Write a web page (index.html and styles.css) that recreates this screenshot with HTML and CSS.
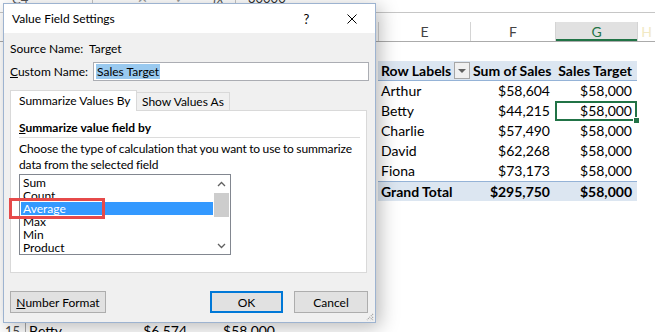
FILE: index.html
```html
<!DOCTYPE html>
<html lang="en">
<head>
    <meta charset="UTF-8">
    <title>Value Field Settings</title>
    <link rel="stylesheet" href="styles.css">
</head>
<body>
    <div class="sheet">
        <div class="fbar">
            <div class="fbar-row">
                <span class="namebox">C4</span>
                <span class="fb-dots">⋮</span>
                <span class="fb-icon">✕</span>
                <span class="fb-icon">✓</span>
                <span class="fb-fx">fx</span>
                <span class="fb-value">30000</span>
            </div>
        </div>

        <!-- row numbers and columns A-D sit under the dialog -->
        <div class="grid colheads">
            <div class="rh"></div>
            <div class="ch"></div><div class="ch"></div><div class="ch"></div><div class="ch"></div>
            <div class="ch">E</div><div class="ch">F</div><div class="ch ch-sel">G</div><div class="ch ch-last">H</div>
        </div>

        <div class="grid row row1">
            <div class="rh"></div>
        </div>
        <div class="grid row">
            <div class="rh"></div><div></div><div></div><div></div><div></div>
            <div class="cell ph labels">Row Labels <span class="filter"></span></div>
            <div class="cell ph num">Sum of Sales</div>
            <div class="cell ph num">Sales Target</div>
            <div></div>
        </div>
        <div class="grid row">
            <div class="rh"></div><div></div><div></div><div></div><div></div>
            <div class="cell">Arthur</div><div class="cell num">$58,604</div><div class="cell num">$58,000</div><div></div>
        </div>
        <div class="grid row">
            <div class="rh"></div><div></div><div></div><div></div><div></div>
            <div class="cell">Betty</div><div class="cell num">$44,215</div><div class="cell num sel">$58,000<span class="handle"></span></div><div></div>
        </div>
        <div class="grid row">
            <div class="rh"></div><div></div><div></div><div></div><div></div>
            <div class="cell">Charlie</div><div class="cell num">$57,490</div><div class="cell num">$58,000</div><div></div>
        </div>
        <div class="grid row">
            <div class="rh"></div><div></div><div></div><div></div><div></div>
            <div class="cell">David</div><div class="cell num">$62,268</div><div class="cell num">$58,000</div><div></div>
        </div>
        <div class="grid row">
            <div class="rh"></div><div></div><div></div><div></div><div></div>
            <div class="cell">Fiona</div><div class="cell num">$73,173</div><div class="cell num">$58,000</div><div></div>
        </div>
        <div class="grid row">
            <div class="rh"></div><div></div><div></div><div></div><div></div>
            <div class="cell pt">Grand Total</div><div class="cell pt num">$295,750</div><div class="cell pt num">$58,000</div><div></div>
        </div>
        <div class="grid row"><div class="rh"></div></div>
        <div class="grid row"><div class="rh"></div></div>
        <div class="grid row"><div class="rh"></div></div>
        <div class="grid row"><div class="rh"></div></div>
        <div class="grid row"><div class="rh"></div></div>
        <div class="grid row"><div class="rh"></div></div>
        <div class="grid row">
            <div class="rh">15</div>
            <div class="cell">Betty</div><div class="cell num">$6,574</div><div class="cell num">$58,000</div>
        </div>
    </div>

    <!-- dialog over the sheet -->
    <div class="dialog">
        <div class="title-bar">
            <span class="title">Value Field Settings</span>
            <span class="help">?</span>
            <span class="close">
                <svg width="10" height="10" viewBox="0 0 10 10"><path d="M0.5 0.5 L9.5 9.5 M9.5 0.5 L0.5 9.5" stroke="#000" stroke-width="1" fill="none"/></svg>
            </span>
        </div>

        <div class="dlg-body">
            <div class="field-row source">
                <span class="lbl">Source Name:</span>
                <span>Target</span>
            </div>
            <div class="field-row custom">
                <span class="lbl"><u>C</u>ustom Name:</span>
                <div class="input"><span class="selected-text">Sales Target</span></div>
            </div>

            <div class="tabs">
                <div class="tab active">Summarize Values By</div>
                <div class="tab">Show Values As</div>
            </div>
            <div class="panel">
                <div class="panel-head"><u>S</u>ummarize value field by</div>
                <p class="panel-desc">Choose the type of calculation that you want to use to summarize data from the selected field</p>
                <div class="listbox">
                    <ul class="items">
                        <li>Sum</li>
                        <li>Count</li>
                        <li class="picked">Average</li>
                        <li>Max</li>
                        <li>Min</li>
                        <li>Product</li>
                    </ul>
                    <div class="scrollbar">
                        <svg class="arrow" width="9" height="6" viewBox="0 0 9 6"><path d="M1 5 L4.5 1.5 L8 5" stroke="#606060" stroke-width="1.3" fill="none"/></svg>
                        <div class="thumb"></div>
                        <svg class="arrow down" width="9" height="6" viewBox="0 0 9 6"><path d="M1 1 L4.5 4.5 L8 1" stroke="#606060" stroke-width="1.3" fill="none"/></svg>
                    </div>
                </div>
            </div>

            <div class="btns">
                <button class="btn btn-format"><u>N</u>umber Format</button>
                <button class="btn btn-ok">OK</button>
                <button class="btn btn-cancel">Cancel</button>
            </div>
        </div>

        <div class="mark"></div>
        <svg class="grip" width="8" height="8" viewBox="0 0 8 8">
            <path d="M7 1 L1 7 M7 4 L4 7 M7 6.5 L6.5 7" stroke="#a0a0a0" stroke-width="1.2" stroke-dasharray="1 1"/>
        </svg>
    </div>
</body>
</html>
```

FILE: styles.css
```css
body { margin: 0; width: 655px; height: 332px; overflow: hidden; position: relative; background: #fff; font-family: Lato, "Liberation Sans", sans-serif; }

/* excel sheet behind */
.fbar { height: 12px; border-bottom: 1px solid #c6c6c6; overflow: hidden; }
.fbar-row { display: flex; align-items: center; height: 14px; margin-top: -9px; font-size: 13px; color: #555; }
.namebox { width: 93px; padding-left: 12px; box-sizing: border-box; border-right: 1px solid #c6c6c6; height: 14px; }
.fb-dots { margin-left: 14px; width: 30px; }
.fb-icon { width: 38px; color: #999; }
.fb-fx { width: 22px; font-style: italic; border-right: 1px solid #c6c6c6; margin-right: 12px; }
.fb-value { color: #333; }

.grid { display: grid; grid-template-columns: 26px 84px 82px 88px 98px 92px 85px 82px 1fr; }
.colheads { margin-top: 9px; height: 19px; border-bottom: 1px solid #ababab; font-size: 14px; line-height: 19px; color: #444; }
.colheads .rh { border-right: 1px solid #ababab; }
.ch { text-align: center; border-left: 1px solid #d4d4d4; }
.ch-sel { background: #e1e1e1; color: #217346; box-shadow: inset 0 -2px 0 #217346; }
.ch-last { color: #f2e9c4; }

.row { height: 20px; font-size: 14px; line-height: 20px; color: #000; }
.row1 { height: 19px; }
.rh { border-right: 1px solid #ababab; color: #444; text-align: center; font-size: 13px; }
.cell { padding: 0 4px 0 3px; white-space: nowrap; overflow: visible; }
.num { text-align: right; padding-right: 5px; }
.ph { background: #dce6f1; font-weight: bold; border-bottom: 1px solid #95b3d7; line-height: 19px; }
.pt { background: #dce6f1; font-weight: bold; border-top: 1px solid #95b3d7; line-height: 19px; }
.labels { display: flex; align-items: center; justify-content: space-between; padding-right: 0; }
.filter { width: 14px; height: 15px; border: 1px solid #a6a6a6; background: #f0f0f0; position: relative; }
.filter::after { content: ""; position: absolute; left: 3px; top: 6px; border-left: 4px solid transparent; border-right: 4px solid transparent; border-top: 4px solid #606060; }
.sel { position: relative; box-shadow: inset 0 0 0 2px #217346; }
.handle { position: absolute; right: -3px; bottom: -3px; width: 5px; height: 5px; background: #217346; border: 1px solid #fff; }

/* dialog */
.dialog { position: absolute; left: 3px; top: 3px; width: 371px; height: 318px; border: 1px solid #9db3d0; background: #f0f0f0; box-shadow: 4px 4px 18px rgba(0, 0, 0, 0.28); font-size: 12px; color: #000; display: flex; flex-direction: column; }
.title-bar { height: 29px; background: #fff; display: flex; align-items: center; padding-left: 8px; }
.title { flex: 1; }
.help { width: 45px; text-align: center; font-size: 13px; }
.close { width: 46px; height: 29px; display: flex; align-items: center; justify-content: center; }

.dlg-body { padding: 0 6px; display: flex; flex-direction: column; }
.field-row { display: flex; align-items: center; }
.lbl { width: 83px; flex-shrink: 0; }
.source { margin-top: 7px; height: 16px; }
.source .lbl { width: 79px; }
.custom { margin-top: 6px; height: 19px; }
.input { flex: 1; height: 19px; box-sizing: border-box; border: 1px solid #abadb3; background: #fff; padding: 1px 2px; line-height: 15px; }
.selected-text { background: #99c9ef; padding: 0 1px; }

.tabs { display: flex; align-items: flex-end; margin-top: 9px; height: 21px; margin-bottom: -1px; position: relative; z-index: 1; }
.tab { height: 18px; box-sizing: border-box; border: 1px solid #d9d9d9; border-bottom: none; background: #f0f0f0; padding: 0 5px; line-height: 17px; width: 94px; margin-bottom: 1px; }
.tab.active { height: 21px; width: 127px; background: #fff; padding-left: 8px; line-height: 20px; margin-bottom: 0; margin-right: -1px; }
.panel { height: 163px; box-sizing: border-box; border: 1px solid #d9d9d9; background: #fff; margin-right: 2px; padding: 0 0 0 8px; }
.panel-head { margin: 9px 6px 0 0; font-weight: bold; line-height: 16px; padding-bottom: 1px; border-bottom: 1px solid #dcdcdc; }
.panel-desc { margin: 3px 0 0; line-height: 16px; letter-spacing: -0.1px; word-spacing: -0.5px; }
.listbox { margin-top: 1px; width: 212px; height: 81px; box-sizing: border-box; border: 1px solid #828790; display: flex; }
.items { list-style: none; margin: 0; padding: 1px 0 0 1px; flex: 1; }
.items li { height: 13px; line-height: 13px; padding-left: 2px; }
.items li.picked { background: #3399ff; color: #fff; }
.scrollbar { width: 17px; display: flex; flex-direction: column; align-items: center; }
.arrow { margin-top: 6px; }
.thumb { width: 15px; height: 24px; background: #cdcdcd; margin-top: 6px; }
.arrow.down { margin-top: auto; margin-bottom: 5px; }

.btns { display: flex; margin-top: 18px; }
.btn { height: 22px; box-sizing: border-box; border: 1px solid #adadad; background: #e1e1e1; font: inherit; color: #000; padding: 0; }
.btn-format { width: 96px; }
.btn-ok { width: 73px; margin-left: auto; border: 2px solid #0078d7; }
.btn-cancel { width: 74px; margin-left: 11px; margin-right: 1px; }

.mark { position: absolute; left: 5px; top: 194px; width: 96px; height: 21px; box-sizing: border-box; border: 3px solid #e64a4a; }
.grip { position: absolute; right: 1px; bottom: 1px; }
```
